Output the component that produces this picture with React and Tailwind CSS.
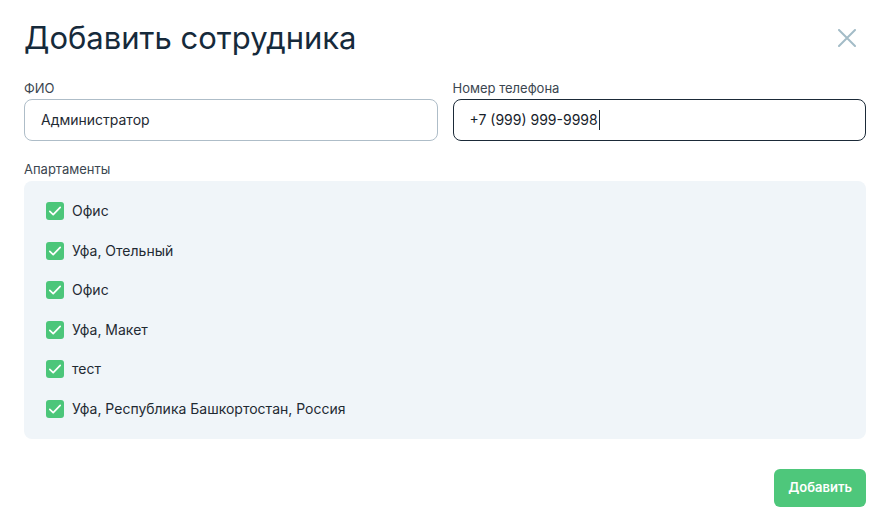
const apartments = [
  "Офис",
  "Уфа, Отельный",
  "Офис",
  "Уфа, Макет",
  "тест",
  "Уфа, Республика Башкортостан, Россия",
];

function CheckIcon() {
  return (
    <svg width="14" height="14" viewBox="0 0 14 14" fill="none">
      <path d="M1.8 7.4 5.2 10.6 12.2 3.4" stroke="white" strokeWidth="1.7" strokeLinecap="round" strokeLinejoin="round" />
    </svg>
  );
}

export default function App() {
  return (
    <div className="w-[890px] h-[527px] bg-white px-6 pt-5 font-['Inter',sans-serif] text-[#1c2b39]">
      {/* header */}
      <div className="flex items-start justify-between">
        <h1 className="text-[31px] leading-9 font-normal text-[#162a3b]">Добавить сотрудника</h1>
        <button className="mt-[9px] mr-[10px] text-[#a3bcc7]">
          <svg width="18" height="18" viewBox="0 0 18 18" fill="none">
            <path d="M1 1 17 17M17 1 1 17" stroke="currentColor" strokeWidth="2" strokeLinecap="round" />
          </svg>
        </button>
      </div>

      {/* fields */}
      <div className="mt-[24px] grid grid-cols-2 gap-[15px]">
        <div>
          <div className="text-[13px] leading-4 text-[#3b4650]">ФИО</div>
          <div className="mt-[3px] h-[42px] rounded-lg border border-[#aebdc8] px-4 flex items-center text-sm text-[#1f2a33]">
            Администратор
          </div>
        </div>
        <div>
          <div className="text-[13px] leading-4 text-[#3b4650]">Номер телефона</div>
          <div className="mt-[3px] h-[42px] rounded-lg border border-[#1b2a38] px-4 flex items-center text-sm text-[#18222b]">
            +7 (999) 999-9998
            <span className="ml-px h-[20px] w-px bg-[#1b2a38]" />
          </div>
        </div>
      </div>

      <div className="mt-[20px] text-[13px] leading-4 text-[#3b4650]">Апартаменты</div>
      <div className="mt-[4px] h-[258px] rounded-lg bg-[#f0f5f9] px-[22px] pt-[21px] flex flex-col gap-[21.6px]">
        {apartments.map((name, i) => (
          <label key={i} className="flex items-center gap-2 h-[18px] text-sm text-[#1f2a33]">
            <span className="w-[18px] h-[18px] rounded-[3px] bg-[#4cc67a] flex items-center justify-center">
              <CheckIcon />
            </span>
            {name}
          </label>
        ))}
      </div>

      <div className="mt-[30px] flex justify-end">
        <button className="h-[38px] px-[14px] rounded-md bg-[#4ec77b] text-white text-[13px] font-semibold">
          Добавить
        </button>
      </div>
    </div>
  );
}
